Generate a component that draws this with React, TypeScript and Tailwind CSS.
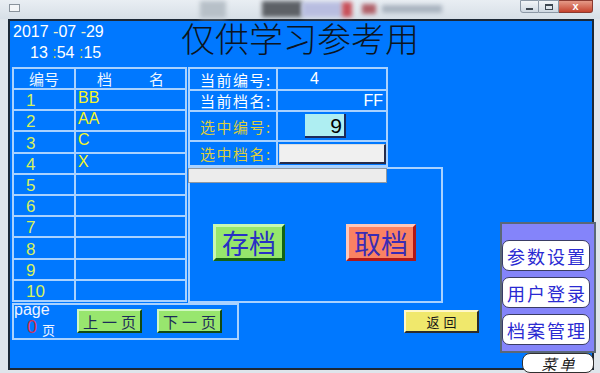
const names = ["BB", "AA", "C", "X", "", "", "", "", "", ""];

const menuItems = ["参数设置", "用户登录", "档案管理"];

function TitleBar() {
  return (
    <div className="flex h-[19px] items-start bg-gradient-to-b from-[#e9eef3] to-[#d7dfe7]">
      <div className="ml-[9px] mt-[4px] h-[8px] w-[11px] border border-[#8a939c] bg-[#f4f6f8]" />
      {/* blurred desktop showing through the glass */}
      <div className="ml-[180px] mt-[1px] h-[17px] w-[26px] bg-[#b7c0c8] blur-[2px]" />
      <div className="ml-[36px] mt-[1px] h-[16px] w-[40px] bg-[#5d6166] blur-[2px]" />
      <div className="mt-[2px] h-[15px] w-[40px] bg-[#b8bde0] blur-[2px]" />
      <div className="mt-[2px] h-[15px] w-[10px] bg-[#c8505a] blur-[2px]" />
      <div className="ml-[10px] mt-[4px] h-[10px] w-[14px] bg-[#b06068] blur-[2px]" />
      <div className="ml-[6px] mt-[5px] h-[8px] w-[60px] bg-[#aab4c0] blur-[2px]" />
      <div className="ml-auto mr-[7px] flex">
        <div className="flex h-[13px] w-[19px] items-end justify-center rounded-bl-[3px] border border-[#8c98a6] bg-gradient-to-b from-[#f2f5f8] to-[#cfd8e2] pb-[2px]">
          <div className="h-[2px] w-[7px] bg-[#3c4650]" />
        </div>
        <div className="flex h-[13px] w-[20px] items-center justify-center border border-l-0 border-[#8c98a6] bg-gradient-to-b from-[#f2f5f8] to-[#cfd8e2]">
          <div className="h-[6px] w-[8px] border border-t-2 border-[#3c4650]" />
        </div>
        <div className="flex h-[13px] w-[34px] items-center justify-center rounded-br-[3px] border border-l-0 border-[#8a3a30] bg-gradient-to-b from-[#e49a88] to-[#c4402c] text-[11px] leading-none font-bold text-white">
          x
        </div>
      </div>
    </div>
  );
}

function FileTable() {
  return (
    <div className="grid h-[235px] w-[175px] grid-cols-[60px_minmax(0,1fr)] grid-rows-[19px_repeat(10,minmax(0,1fr))] gap-[2px] bg-[#a9d2ff] p-[2px]">
      <div className="flex items-center justify-center bg-[#0078ff] text-[15px] leading-none text-[#eef6ff] font-['Noto_Sans_CJK_SC',sans-serif]">
        编号
      </div>
      <div className="flex items-center justify-between bg-[#0078ff] px-[21px] text-[15px] leading-none text-[#eef6ff] font-['Noto_Sans_CJK_SC',sans-serif]">
        <span>档</span>
        <span>名</span>
      </div>
      {names.map((name, i) => (
        <div key={i} className="contents">
          <div className="flex items-end bg-[#0078ff] pl-[12px] text-[17px] leading-none text-[#d8f25c]">
            {i + 1}
          </div>
          <div className="flex items-start bg-[#0078ff] pl-[2px] text-[16px] leading-none text-[#f6f628]">
            {name}
          </div>
        </div>
      ))}
    </div>
  );
}

function InfoPanel() {
  const label = "flex items-center bg-[#0078ff] pl-[10px] text-[15px] leading-none tracking-[1.5px] font-['Noto_Sans_CJK_SC',sans-serif]";
  return (
    <div className="grid h-[100px] w-[200px] grid-cols-[86px_minmax(0,1fr)] grid-rows-[20px_19px_28px_23px] gap-[2px] bg-[#a9d2ff] p-[2px]">
      <div className={`${label} text-white`}>当前编号:</div>
      <div className="flex items-center bg-[#0078ff] pl-[32px] text-[16px] leading-none text-white">4</div>
      <div className={`${label} text-white`}>当前档名:</div>
      <div className="flex items-center justify-end bg-[#0078ff] pr-[3px] text-[16px] leading-none text-white">FF</div>
      <div className={`${label} text-[#dccd3e]`}>选中编号:</div>
      <div className="flex items-center bg-[#0078ff]">
        <div className="ml-[27px] flex h-[24px] w-[41px] items-center justify-end border-r-2 border-b-2 border-[#1c2a5c] bg-[#aeeef2] pr-[2px] text-[21px] leading-none text-black">
          9
        </div>
      </div>
      <div className={`${label} text-[#dccd3e]`}>选中档名:</div>
      <div className="flex items-center bg-[#0078ff]">
        <div className="ml-[1px] h-[20px] w-[108px] border border-r-2 border-b-2 border-t-[#d8dce0] border-l-[#d8dce0] border-r-[#262c4a] border-b-[#262c4a] bg-[#f0f0f0]" />
      </div>
    </div>
  );
}

function ActionFrame() {
  const btn = "flex h-[37px] items-center justify-center border-[3px] text-[27px] leading-none font-['Noto_Sans_CJK_SC',sans-serif]";
  return (
    <div className="h-[136px] w-[255px] border-2 border-[#a9d2ff]">
      <div className="-mt-[1px] -ml-[2px] h-[15px] w-[199px] border border-[#8e98a2] bg-[#ececec]" />
      <div className="mt-[41px] flex pl-[23px]">
        <div className={`${btn} w-[72px] border-t-[#c8f8b0] border-l-[#c8f8b0] border-r-[#146414] border-b-[#146414] bg-[#96e66c] text-[#2830c4]`}>
          存档
        </div>
        <div className={`${btn} ml-[61px] w-[70px] border-t-[#ffc8b8] border-l-[#ffc8b8] border-r-[#b01818] border-b-[#b01818] bg-[#fa8262] text-[#3a2cb4]`}>
          取档
        </div>
      </div>
    </div>
  );
}

function PageBox() {
  const btn = "flex h-[24px] w-[65px] items-center justify-center border-2 border-t-[#d0f8c0] border-l-[#d0f8c0] border-r-[#124a12] border-b-[#124a12] bg-[#98e66e] pl-[4px] text-[15px] leading-none tracking-[4px] text-[#1c2c58] font-['Noto_Sans_CJK_SC',sans-serif]";
  return (
    <div className="flex h-[37px] w-[227px] border-2 border-[#a9d2ff]">
      <div className="flex w-[63px] flex-col">
        <div className="-mt-[3px] text-[16px] leading-none text-[#f0f4ff]">page</div>
        <div className="flex items-end gap-[5px] pl-[13px]">
          <span className="text-[18px] leading-none text-[#d8304a]">0</span>
          <span className="text-[13px] leading-none text-[#f0f4ff] font-['Noto_Sans_CJK_SC',sans-serif]">页</span>
        </div>
      </div>
      <div className="mt-[4px] flex">
        <div className={btn}>上一页</div>
        <div className={`${btn} ml-[15px]`}>下一页</div>
      </div>
    </div>
  );
}

function Menu() {
  return (
    <>
      <div className="absolute left-[500px] top-[222px] flex h-[131px] w-[96px] flex-col gap-[6px] border-2 border-[#5a6878] bg-[#8484fa] pt-[16px]">
        {menuItems.map((m) => (
          <div
            key={m}
            className="flex h-[31px] w-[88px] items-center justify-center rounded-[7px] border border-[#3a3c64] bg-white pl-[2px] text-[18px] leading-none tracking-[2px] text-[#2a2ad2] font-['Noto_Sans_CJK_SC',sans-serif]"
          >
            {m}
          </div>
        ))}
      </div>
      <div className="absolute left-[522px] top-[353px] flex h-[20px] w-[72px] items-center justify-center rounded-[8px] border border-[#303030] bg-white pl-[3px] text-[15px] leading-none tracking-[3px] text-[#202020] italic font-['Noto_Sans_CJK_SC',sans-serif]">
        菜单
      </div>
    </>
  );
}

export default function App() {
  return (
    <div className="relative h-[373px] w-[600px] overflow-hidden bg-[#dfe5eb] font-['Liberation_Sans','Noto_Sans_CJK_SC',sans-serif]">
      <TitleBar />
      <div className="ml-[8px] mr-[6px] h-[351px] border-2 border-[#1c2836] bg-[#0078ff]">
        {/* header: clock + title */}
        <div className="flex h-[46px]">
          <div className="w-[171px] pl-[3px] pt-[2px] text-[16px] leading-[18px] text-white">
            <div>
              2017 <span className="text-[#f2f2c4]">-</span>07 <span className="text-[#f2f2c4]">-</span>29
            </div>
            <div className="ml-[17px] mt-[3px]">
              13 <span className="text-[#d8d444]">:</span>54 <span className="text-[#d8d444]">:</span>15
            </div>
          </div>
          <div className="text-[34px] leading-none font-light text-[#0c1420] font-['Noto_Sans_CJK_SC',sans-serif]">
            仅供学习参考用
          </div>
        </div>
        {/* body */}
        <div className="flex flex-col pl-[2px]">
          <div className="flex items-start">
            <FileTable />
            <div className="ml-[1px] flex w-[255px] flex-col">
              <InfoPanel />
              <ActionFrame />
            </div>
          </div>
          <div className="flex items-start">
            <PageBox />
            <div className="ml-[165px] mt-[7px] flex h-[23px] w-[75px] items-center justify-center border-2 border-t-[#fff8c8] border-l-[#fff8c8] border-r-[#2c2c2c] border-b-[#2c2c2c] bg-[#f0e86c] pl-[4px] text-[13px] leading-none tracking-[4px] text-[#181818] font-['Noto_Sans_CJK_SC',sans-serif]">
              返回
            </div>
          </div>
        </div>
      </div>
      <Menu />
    </div>
  );
}
